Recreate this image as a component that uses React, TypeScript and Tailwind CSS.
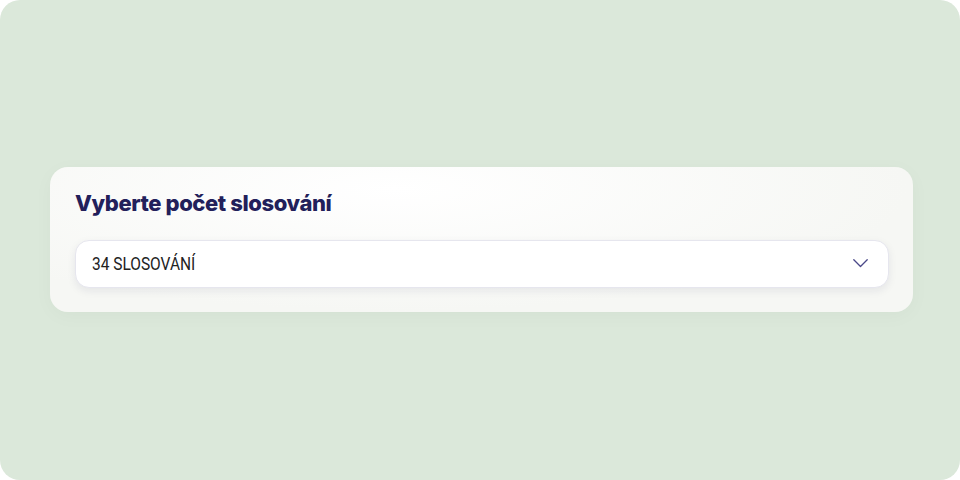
export default function App() {
  return (
    <div className="w-[960px] h-[480px] bg-white">
      <div className="w-full h-full rounded-[20px] bg-[#dbe8da] flex items-center pl-[50px] pr-[47px]">
        <div className="w-full h-[145px] -mt-[2px] rounded-[18px] bg-[radial-gradient(ellipse_at_40%_15%,#ffffff_0%,#f6f7f4_70%)] shadow-[0_4px_20px_rgba(0,0,0,0.03)] pl-[25px] pr-[24px] pt-[21px]">
          <h2 className="text-[22px] font-extrabold text-[#22205a] leading-[30px] tracking-[-0.4px]" style={{ fontFamily: "Inter, Lato, sans-serif" }}>
            Vyberte počet slosování
          </h2>
          <div className="mt-[22px] h-[48px] rounded-[14px] bg-white border border-[#e6e6ee] shadow-[0_3px_8px_rgba(30,30,80,0.08)] flex items-center justify-between pl-[16px] pr-[20px]">
            <span className="inline-block text-[18px] text-[#222] origin-left scale-x-[0.86] whitespace-nowrap" style={{ fontFamily: "Roboto, sans-serif" }}>
              34 SLOSOVÁNÍ
            </span>
            <svg width="15" height="9" viewBox="0 0 15 9" fill="none">
              <path d="M0.8 0.8l6.7 6.7 6.7-6.7" stroke="#4a4888" strokeWidth="1.3" strokeLinecap="round" strokeLinejoin="round" />
            </svg>
          </div>
        </div>
      </div>
    </div>
  );
}
